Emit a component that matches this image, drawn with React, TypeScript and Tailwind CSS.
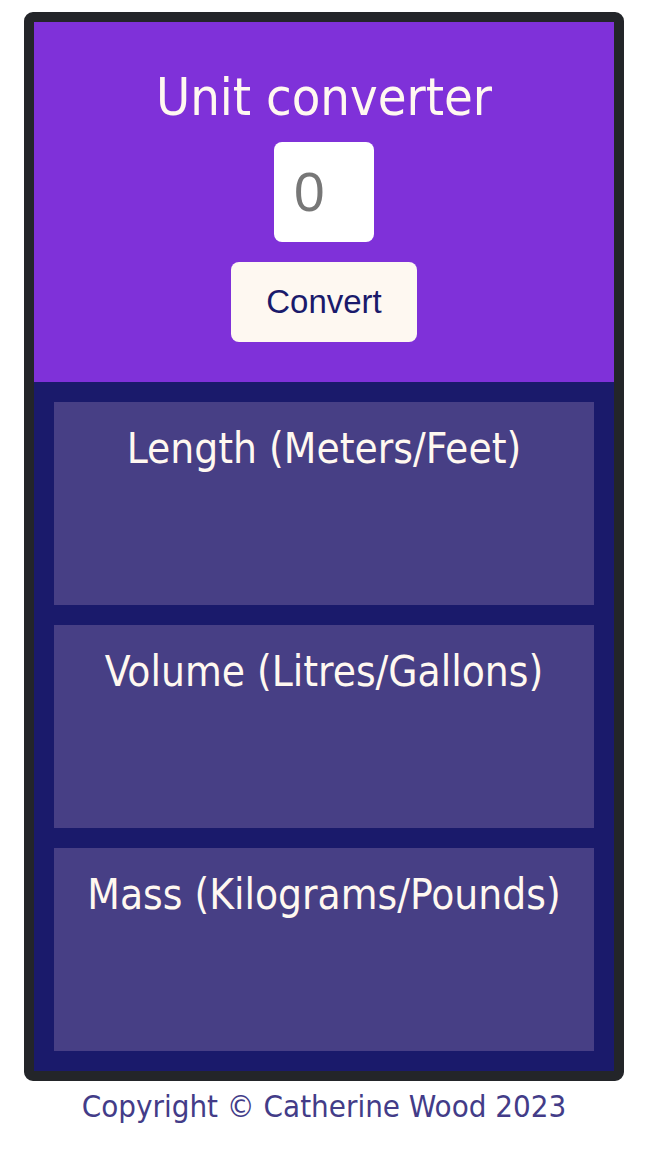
export default function App() {
  const cards = [
    "Length (Meters/Feet)",
    "Volume (Litres/Gallons)",
    "Mass (Kilograms/Pounds)",
  ];

  return (
    <div className="w-[648px] min-h-[1152px] bg-white font-['Tahoma','DejaVu_Sans_Condensed','DejaVu_Sans',sans-serif]">
      <div className="w-[600px] mx-auto mt-3 border-[10px] border-[#232529] rounded-[9px] overflow-hidden">
        {/* Header */}
        <div className="h-[360px] bg-[#7f31d9] flex flex-col items-center pt-[45px]">
          <h1 className="text-[52px] leading-[60px] text-[#fff8f0]">Unit converter</h1>
          <input
            type="number"
            placeholder="0"
            className="mt-[15px] w-[100px] h-[100px] rounded-lg bg-white pl-5 text-[55px] text-[#777] placeholder:text-[#777] outline-none font-['Helvetica','Liberation_Sans',sans-serif] [appearance:textfield]"
          />
          <button className="mt-5 w-[186px] h-[80px] rounded-lg bg-[#fef8f1] text-[#1a1a6b] text-[33px] font-['Helvetica','Liberation_Sans',sans-serif]">
            Convert
          </button>
        </div>

        {/* Results */}
        <div className="bg-[#1a1a6b] p-5 flex flex-col gap-5">
          {cards.map((title) => (
            <div key={title} className="h-[203px] bg-[#473f85] pt-[22px] text-center">
              <h2 className="text-[42px] leading-[50px] text-[#fff8f0]">{title}</h2>
            </div>
          ))}
        </div>
      </div>

      <p className="mt-[5px] text-center text-[31px] leading-[40px] text-[#433c88]">
        Copyright © Catherine Wood 2023
      </p>
    </div>
  );
}
